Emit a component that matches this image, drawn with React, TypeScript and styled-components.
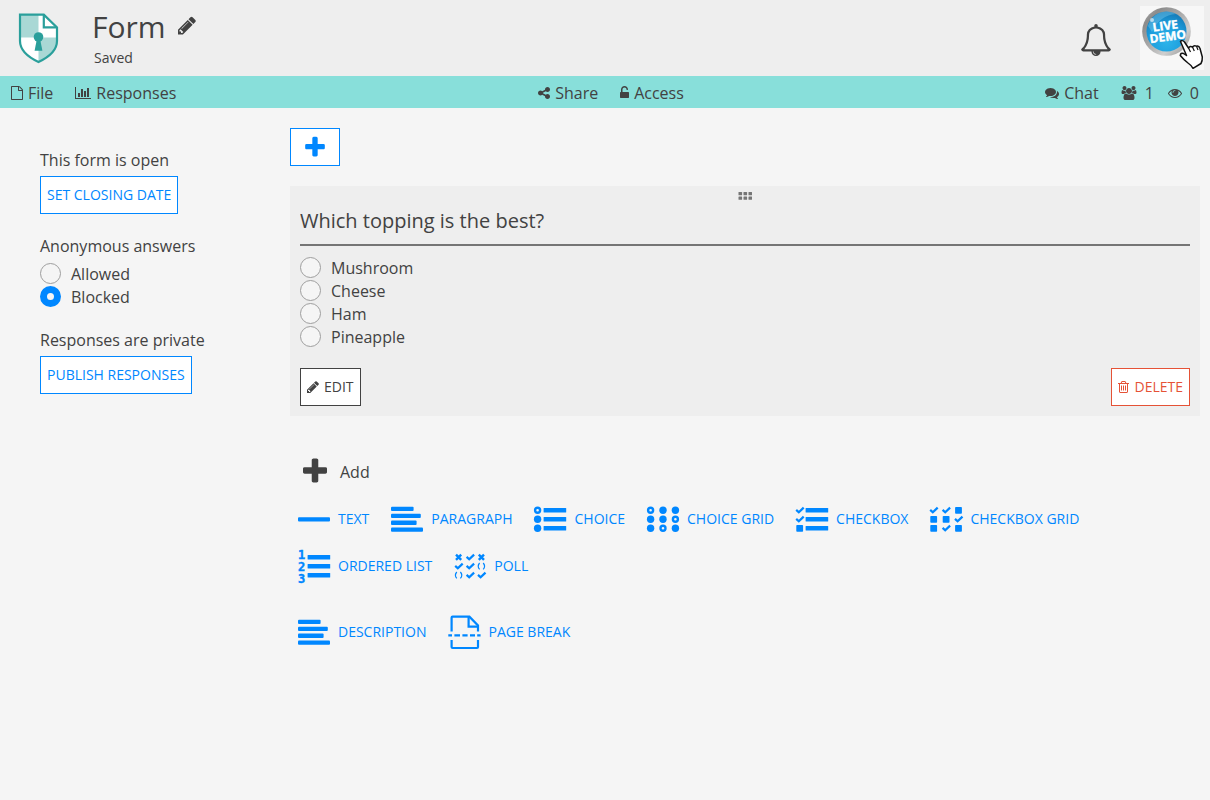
import React, { ReactNode, useState } from "react";
import styled, { createGlobalStyle, css } from "styled-components";

const colors = {
  page: "#f5f5f5",
  panel: "#eeeeee",
  bar: "#88dfda",
  text: "#424242",
  primary: "#0087ff",
  danger: "#e55236",
  line: "#757575",
  logo: "#2a9f9b",
  logoTint: "#a9d8d5",
};

const GlobalStyle = createGlobalStyle`
  *, *::before, *::after { box-sizing: border-box; }
  body {
    margin: 0;
    background: ${colors.page};
    color: ${colors.text};
    font: 16px/24px "Open Sans", sans-serif;
  }
  button, input { font: inherit; color: inherit; margin: 0; }
  button { cursor: pointer; }
  svg { display: block; flex: none; }
`;

/* ---------- glyphs on a 1792-unit em ---------- */

const glyphs = {
  pencil: {
    x: 128, w: 1536,
    d: "M491 1536l91-91-235-235-91 91v107h128v128h107zm523-928q0-22-22-22-10 0-17 7l-542 542q-7 7-7 17 0 22 22 22 10 0 17-7l542-542q7-7 7-17zm-54-192l416 416-832 832h-416v-416zm683 96q0 53-37 90l-166 166-416-416 166-165q36-38 90-38 53 0 91 38l235 234q37 39 37 91z",
  },
  file: {
    x: 128, w: 1536,
    d: "M1596 380q28 28 48 76t20 88v1152q0 40-28 68t-68 28h-1344q-40 0-68-28t-28-68v-1600q0-40 28-68t68-28h896q40 0 88 20t76 48zm-444-244v376h376q-10-29-22-41l-313-313q-12-12-41-22zm384 1528v-1024h-416q-40 0-68-28t-28-68v-416h-768v1536h1280z",
  },
  chart: {
    x: 0, w: 2048,
    d: "M640 896v512h-256v-512h256zm384-512v1024h-256v-1024h256zm1024 1152v128h-2048v-1536h128v1408h1920zm-640-896v768h-256v-768h256zm384-384v1152h-256v-1152h256z",
  },
  share: {
    x: 128, w: 1536,
    d: "M1344 1024q133 0 226.5 93.5t93.5 226.5-93.5 226.5-226.5 93.5-226.5-93.5-93.5-226.5q0-12 2-34l-360-180q-92 86-218 86-133 0-226.5-93.5t-93.5-226.5 93.5-226.5 226.5-93.5q126 0 218 86l360-180q-2-22-2-34 0-133 93.5-226.5t226.5-93.5 226.5 93.5 93.5 226.5-93.5 226.5-226.5 93.5q-126 0-218-86l-360 180q2 22 2 34t-2 34l360 180q92-86 218-86z",
  },
  unlock: {
    x: 320, w: 1152,
    d: "M1376 768q40 0 68 28t28 68v576q0 40-28 68t-68 28h-960q-40 0-68-28t-28-68v-576q0-40 28-68t68-28h32v-320q0-185 131.5-316.5t316.5-131.5 316.5 131.5 131.5 316.5q0 26-19 45t-45 19h-64q-26 0-45-19t-19-45q0-106-75-181t-181-75-181 75-75 181v320h736z",
  },
  comments: {
    x: 0, w: 1792,
    d: "M1408 768q0 139-94 257t-256.5 186.5-353.5 68.5q-86 0-176-16-124 88-278 128-36 9-86 16h-3q-11 0-20.5-8t-11.5-21q-1-3-1-6.5t.5-6.5 2-6l2.5-5 3.5-5.5 4-5 4.5-5 4-4.5q5-6 23-25t26-29.5 22.5-29 25-38.5 20.5-44q-124-72-195-177t-71-224q0-139 94-257t256.5-186.5 353.5-68.5 353.5 68.5 256.5 186.5 94 257zm384 256q0 120-71 224.5t-195 176.5q10 24 20.5 44t25 38.5 22.5 29 26 29.5 23 25q1 1 4 4.5t4.5 5 4 5 3.5 5.5l2.5 5 2 6 .5 6.5-1 6.5q-3 14-13 22t-22 7q-50-7-86-16-154-40-278-128-90 16-176 16-271 0-472-132 58 4 88 4 161 0 309-45t264-129q125-92 192-212t67-254q0-77-23-152 129 71 204 178t75 230z",
  },
  users: {
    x: 0, w: 2048,
    d: "M657 896q-162 5-265 128h-134q-82 0-138-40.5t-56-118.5q0-353 124-353 6 0 43.5 21t97.5 42.5 119 21.5q67 0 133-23-5 37-5 66 0 139 81 256zm1071 637q0 120-73 189.5t-194 69.5h-874q-121 0-194-69.5t-73-189.5q0-53 3.5-103.5t14-109 26.5-108.5 43-97.5 62-81 85.5-53.5 111.5-20q10 0 43 21.5t73 48 107 48 135 21.5 135-21.5 107-48 73-48 43-21.5q61 0 111.5 20t85.5 53.5 62 81 43 97.5 26.5 108.5 14 109 3.5 103.5zm-1024-1277q0 106-75 181t-181 75-181-75-75-181 75-181 181-75 181 75 75 181zm704 384q0 159-112.5 271.5t-271.5 112.5-271.5-112.5-112.5-271.5 112.5-271.5 271.5-112.5 271.5 112.5 112.5 271.5zm576 225q0 78-56 118.5t-138 40.5h-134q-103-123-265-128 81-117 81-256 0-29-5-66 66 23 133 23 59 0 119-21.5t97.5-42.5 43.5-21q124 0 124 353zm-128-609q0 106-75 181t-181 75-181-75-75-181 75-181 181-75 181 75 75 181z",
  },
  eye: {
    x: 0, w: 1792,
    d: "M1664 960q-152-236-381-353 61 104 61 225 0 185-131.5 316.5t-316.5 131.5-316.5-131.5-131.5-316.5q0-121 61-225-229 117-381 353 133 205 333.5 326.5t434.5 121.5 434.5-121.5 333.5-326.5zm-720-384q0-20-14-34t-34-14q-125 0-214.5 89.5t-89.5 214.5q0 20 14 34t34 14 34-14 14-34q0-86 61-147t147-61q20 0 34-14t14-34zm848 384q0 34-20 69-140 230-376.5 368.5t-499.5 138.5-499.5-139-376.5-368q-20-35-20-69t20-69q140-229 376.5-368t499.5-139 499.5 139 376.5 368q20 35 20 69z",
  },
  plus: {
    x: 192, w: 1408,
    d: "M1600 736v192q0 40-28 68t-68 28h-416v416q0 40-28 68t-68 28h-192q-40 0-68-28t-28-68v-416h-416q-40 0-68-28t-28-68v-192q0-40 28-68t68-28h416v-416q0-40 28-68t68-28h192q40 0 68 28t28 68v416h416q40 0 68 28t28 68z",
  },
  trash: {
    x: 192, w: 1408,
    d: "M704 736v576q0 14-9 23t-23 9h-64q-14 0-23-9t-9-23v-576q0-14 9-23t23-9h64q14 0 23 9t9 23zm256 0v576q0 14-9 23t-23 9h-64q-14 0-23-9t-9-23v-576q0-14 9-23t23-9h64q14 0 23 9t9 23zm256 0v576q0 14-9 23t-23 9h-64q-14 0-23-9t-9-23v-576q0-14 9-23t23-9h64q14 0 23 9t9 23zm128 724v-948h-896v948q0 22 7 40.5t14.5 27 10.5 8.5h832q3 0 10.5-8.5t14.5-27 7-40.5zm-672-1076h448l-48-117q-7-9-17-11h-317q-10 2-17 11zm928 32v64q0 14-9 23t-23 9h-96v948q0 83-47 143.5t-113 60.5h-832q-66 0-113-58.5t-47-141.5v-952h-96q-14 0-23-9t-9-23v-64q0-14 9-23t23-9h309l70-167q15-37 54-63t79-26h320q40 0 79 26t54 63l70 167h309q14 0 23 9t9 23z",
  },
  bell: {
    x: 0, w: 1792,
    d: "M912 1696q0-16-16-16-59 0-101.5-42.5t-42.5-101.5q0-16-16-16t-16 16q0 73 51.5 124.5t124.5 51.5q16 0 16-16zm-666-288h1300q-266-300-266-832 0-51-24-105t-69-103-121.5-80.5-169.5-31.5-169.5 31.5-121.5 80.5-69 103-24 105q0 532-266 832zm1482 0q0 52-38 90t-90 38h-448q0 106-75 181t-181 75-181-75-75-181h-448q-52 0-90-38t-38-90q50-42 91-88t85-119.5 74.5-158.5 50-206 19.5-260q0-152 117-282.5t307-158.5q-8-19-8-39 0-40 28-68t68-28 68 28 28 68q0 20-8 39 190 28 307 158.5t117 282.5q0 139 19.5 260t50 206 74.5 158.5 85 119.5 91 88z",
  },
};

function Glyph({ name, size = 14 }: { name: keyof typeof glyphs; size?: number }) {
  const g = glyphs[name];
  return (
    <svg
      width={Math.round((size * g.w) / 1792)}
      height={size}
      viewBox={`${g.x} 0 ${g.w} 1792`}
      fill="currentColor"
      aria-hidden="true"
    >
      <path d={g.d} />
    </svg>
  );
}

/* ---------- question type icons, 32 x 32 ---------- */

const cols = [3.6, 16, 28.4];
const rows = [7.2, 16.2, 25.2];

type MarkKind = "dot" | "ring" | "square" | "check" | "cross" | "parens";

function Mark({ kind, x, y }: { kind: MarkKind; x: number; y: number }) {
  switch (kind) {
    case "dot":
      return <circle cx={x} cy={y} r={3.7} fill="currentColor" />;
    case "ring":
      return <circle cx={x} cy={y} r={2.5} fill="none" stroke="currentColor" strokeWidth={2.4} />;
    case "square":
      return <rect x={x - 3.3} y={y - 3.3} width={6.8} height={6.8} rx={0.8} fill="currentColor" />;
    case "check":
      return (
        <path
          d={`M${x - 3.4} ${y - 0.3}l2.6 2.4 4.9-4.7`}
          fill="none" stroke="currentColor" strokeWidth={2.2}
        />
      );
    case "cross":
      return (
        <path
          d={`M${x - 2.6} ${y - 2.6}l5.200 5.200m0-5.200l-5.200 5.200`}
          fill="none" stroke="currentColor" strokeWidth={2.4}
        />
      );
    case "parens":
      return (
        <path
          d={`M${x - 1.8} ${y - 3.2}q-2.8 3.2 0 6.4M${x + 1.8} ${y - 3.2}q2.8 3.2 0 6.4`}
          fill="none" stroke="currentColor" strokeWidth={1.2}
        />
      );
  }
}

const TypeSvg = ({ children }: { children: ReactNode }) => (
  <svg width="32" height="32" viewBox="0 0 32 32" overflow="visible" aria-hidden="true">
    {children}
  </svg>
);

const ListBars = () => (
  <g fill="currentColor">
    {rows.map((y) => (
      <rect key={y} x={9.6} y={y - 2.3} width={22.6} height={4.6} rx={0.5} />
    ))}
  </g>
);

const ListIcon = ({ marks }: { marks: MarkKind[] }) => (
  <TypeSvg>
    {marks.map((kind, i) => <Mark key={i} kind={kind} x={3.6} y={rows[i]} />)}
    <ListBars />
  </TypeSvg>
);

const GridIcon = ({ marks, inset = 0 }: { marks: MarkKind[]; inset?: number }) => (
  <TypeSvg>
    {marks.map((kind, i) => (
      <Mark key={i} kind={kind} x={cols[i % 3] + inset * (1 - (i % 3))} y={rows[Math.floor(i / 3)]} />
    ))}
  </TypeSvg>
);

const TextIcon = () => (
  <TypeSvg>
    <rect x={0} y={14.2} width={32} height={4.3} rx={1} fill="currentColor" />
  </TypeSvg>
);

const ParagraphIcon = () => (
  <TypeSvg>
    <g fill="currentColor">
      <rect x={0} y={3.7} width={22.6} height={4.3} rx={1} />
      <rect x={0} y={10.8} width={29.8} height={4.3} rx={1} />
      <rect x={0} y={17.6} width={25.6} height={4.3} rx={1} />
      <rect x={0} y={24.5} width={32} height={4.3} rx={1} />
    </g>
  </TypeSvg>
);

const Numeral = styled.text`
  font: bold 12px "DejaVu Sans Mono", monospace;
  fill: currentColor;
  stroke: currentColor;
  stroke-width: 0.4px;
`;

const OrderedIcon = () => (
  <TypeSvg>
    <Numeral x={0} y={9}>1</Numeral>
    <Numeral x={0} y={21}>2</Numeral>
    <Numeral x={0} y={33}>3</Numeral>
    <ListBars />
  </TypeSvg>
);

const PageBreakIcon = () => (
  <TypeSvg>
    <g fill="none" stroke="currentColor" strokeWidth={2.2}>
      <path d="M3.6 15.5V1.7q0-1 1-1H21.4L30 9.5v6" />
      <path d="M20.6 .7V10.6H30" />
      <path d="M3.6 24V31q0 1 1 1H29q1 0 1-1V24" />
      <path d="M.3 19.4H4M6.4 19.4H12M14.4 19.4H19.6M22 19.4H27M29.2 19.4H32.6" />
    </g>
  </TypeSvg>
);

/* ---------- brand drawings ---------- */

const Logo = () => (
  <svg width="50" height="58" viewBox="0 0 50 58" role="img" aria-label="Form application">
    <path d="M6 5.7H30L43 18.5V32C43 42 34 48.5 24.5 53C15 48.5 6 42 6 32Z" fill="#fff" />
    <path d="M6 5.7H24.5V28.5H6Z" fill={colors.logoTint} />
    <path d="M24.5 28.5H43V32C43 42 34 48.5 24.5 53Z" fill={colors.logoTint} />
    <path
      d="M6 5.7H29.8L43 18.5V32C43 42 34 48.5 24.5 53C15 48.5 6 42 6 32Z"
      fill="none" stroke={colors.logo} strokeWidth="2.2"
    />
    <path d="M29.8 5.7V18.3H43" fill="none" stroke={colors.logo} strokeWidth="2.2" />
    <circle cx="24.5" cy="28" r="4.8" fill={colors.logo} />
    <path d="M22.9 30H26.1L28.4 41.700H20.6Z" fill={colors.logo} />
  </svg>
);

const DemoWord = styled.text`
  font: bold 12px "Open Sans", sans-serif;
  fill: #fff;
  stroke: #fff;
  stroke-width: 0.4px;
  text-anchor: middle;
`;

const DemoBadge = () => (
  <svg width="64" height="64" viewBox="0 0 64 64" role="img" aria-label="Live demo">
    <defs>
      <linearGradient id="rim" x1="0" y1="0" x2="1" y2="1">
        <stop offset="0" stopColor="#b9b9b9" />
        <stop offset="0.2" stopColor="#8c8c8c" />
        <stop offset="0.45" stopColor="#a8a8a8" />
        <stop offset="0.7" stopColor="#cfcfcf" />
        <stop offset="1" stopColor="#8a8a8a" />
      </linearGradient>
      <radialGradient id="face" cx="0.5" cy="0.75" r="0.75">
        <stop offset="0" stopColor="#2cb4ea" />
        <stop offset="0.6" stopColor="#1c9cdc" />
        <stop offset="1" stopColor="#1579b5" />
      </radialGradient>
    </defs>
    <rect width="64" height="64" fill="#f7f7f7" />
    <circle cx="26.5" cy="25.5" r="24.3" fill="url(#rim)" />
    <circle cx="26.5" cy="25.5" r="20" fill="url(#face)" />
    <path d="M8 20A19 19 0 0 1 36 8Q20 9 12 26Z" fill="#7fd0f2" opacity="0.4" />
    <circle cx="12" cy="14" r="2" fill="#fff" opacity="0.6" />
    <g transform="rotate(-8 26 25)">
      <DemoWord x="26" y="24">LIVE</DemoWord>
      <DemoWord x="27" y="35">DEMO</DemoWord>
    </g>
    <path
      d="M40.5 35.5Q42 33.5 44.5 36L48.5 42Q50 39.5 52.5 41Q54 38.8 56.5 40.2Q59 39.5 60 42.5L62.3 51Q62.5 55 61 57.5L53 62.3Q51 59 48 57Q43 53 40.3 49.5Q40.5 46.5 43.5 47.5L46.5 49.5Z"
      fill="#fff" stroke="#111" strokeWidth="1.5" strokeLinejoin="round"
    />
    <path d="M48.5 42L50.5 46M52.5 41L54.3 45M56.5 40.2L58 44" stroke="#111" strokeWidth="1.2" />
  </svg>
);

const GripIcon = () => (
  <svg width="14" height="8" viewBox="0 0 14 8" fill={colors.line} aria-hidden="true">
    {[0, 5, 10].map((x) =>
      [0, 4.5].map((y) => <rect key={`${x}-${y}`} x={x + 0.5} y={y} width={3.6} height={3.3} rx={0.6} />)
    )}
  </svg>
);

/* ---------- page parts ---------- */

const Header = styled.header`
  display: flex;
  align-items: center;
  height: 76px;
  padding: 0 6px 0 14px;
  background: ${colors.panel};
`;

const TitleBlock = styled.div`
  flex: 1;
  padding-left: 28px;
`;

const TitleRow = styled.div`
  display: flex;
  align-items: center;
  gap: 12px;
`;

const Title = styled.h1`
  margin: 0;
  font-size: 30px;
  line-height: 40px;
  font-weight: 400;
`;

const SaveState = styled.div`
  padding-left: 2px;
  font-size: 14px;
  line-height: 22px;
`;

const PlainButton = styled.button`
  display: flex;
  align-items: center;
  padding: 0;
  border: 0;
  background: none;
`;

const RenameButton = styled(PlainButton)`
  padding-bottom: 4px;
`;

const BellButton = styled(PlainButton)`
  padding-top: 4px;
`;

const UserArea = styled.div`
  display: flex;
  align-items: center;
  gap: 28px;
`;

const Toolbar = styled.nav`
  display: grid;
  grid-template-columns: 1fr auto 1fr;
  align-items: center;
  min-height: 32px;
  padding: 2px 11px 0;
  background: ${colors.bar};
`;

const ToolGroup = styled.div<{ $align?: "center" | "end" }>`
  display: flex;
  gap: 22px;
  ${(p) => p.$align === "center" && css`padding-left: 12px;`}
  ${(p) => p.$align === "end" && css`justify-content: flex-end;`}
`;

const ToolButton = styled(PlainButton)`
  gap: 5px;
  line-height: 24px;
`;

const Presence = styled.div`
  display: flex;
  align-items: center;
  gap: 8px;
`;

const PresenceGroup = styled.div`
  display: flex;
  gap: 14px;
`;

const Layout = styled.div`
  display: flex;
  align-items: flex-start;
`;

const Sidebar = styled.aside`
  display: flex;
  flex: none;
  flex-direction: column;
  gap: 20px;
  width: 290px;
  padding: 40px 20px 20px 40px;
`;

const SideSection = styled.section`
  display: flex;
  flex-direction: column;
  align-items: flex-start;
  gap: 4px;
`;

const Fieldset = styled.fieldset`
  min-width: 0;
  margin: 0;
  padding: 0;
  border: 0;
`;

const Legend = styled.legend`
  padding: 0 0 4px;
`;

const OutlineButton = styled.button<{ $tone?: "primary" | "neutral" | "danger" }>`
  display: flex;
  align-items: center;
  justify-content: center;
  gap: 5px;
  height: 38px;
  padding: 0 6px;
  border: 1px solid;
  background: #fff;
  font-size: 14px;
  line-height: 20px;
  text-transform: uppercase;
  color: ${(p) =>
    p.$tone === "danger" ? colors.danger : p.$tone === "neutral" ? colors.text : colors.primary};
`;

const InsertButton = styled(OutlineButton)`
  width: 50px;
`;

const RadioLabel = styled.label`
  display: flex;
  align-items: center;
  gap: 10px;
  height: 23px;
`;

const RadioInput = styled.input`
  appearance: none;
  width: 21px;
  height: 21px;
  border: 1px solid #9e9e9e;
  border-radius: 50%;
  background: ${colors.page};
  &:checked {
    border: 7px solid ${colors.primary};
  }
`;

const Main = styled.main`
  display: flex;
  flex: 1;
  flex-direction: column;
  align-items: flex-start;
  gap: 20px;
  min-width: 0;
  padding: 20px 10px 20px 0;
`;

const Card = styled.section`
  width: 100%;
  padding: 0 10px 10px;
  background: ${colors.panel};
`;

const Grip = styled.div`
  display: flex;
  align-items: center;
  justify-content: center;
  height: 20px;
`;

const QuestionInput = styled.input`
  display: block;
  width: 100%;
  height: 40px;
  margin-bottom: 10px;
  padding: 0 0 10px;
  border: 0;
  border-bottom: 2px solid ${colors.line};
  border-radius: 0;
  background: none;
  font-size: 20px;
  line-height: 28px;
`;

const CardActions = styled.div`
  display: flex;
  justify-content: space-between;
  padding-top: 20px;
`;

const AddPanel = styled.section`
  padding-top: 20px;
`;

const AddHeading = styled.h2`
  display: flex;
  align-items: center;
  gap: 13px;
  margin: 0 0 11px;
  padding-left: 13px;
  font-size: 16px;
  line-height: 30px;
  font-weight: 400;
`;

const TypeRow = styled.div`
  display: flex;
  flex-wrap: wrap;
  gap: 5px 6px;
  & + & {
    margin-top: 24px;
  }
`;

const TypeButton = styled(PlainButton)`
  gap: 8px;
  height: 42px;
  padding: 0 8px;
  font-size: 14px;
  line-height: 20px;
  text-transform: uppercase;
  color: ${colors.primary};
`;

const fieldTypes: [string, ReactNode][] = [
  ["Text", <TextIcon />],
  ["Paragraph", <ParagraphIcon />],
  ["Choice", <ListIcon marks={["ring", "dot", "dot"]} />],
  ["Choice grid", <GridIcon marks={["ring", "dot", "dot", "dot", "dot", "ring", "dot", "ring", "dot"]} />],
  ["Checkbox", <ListIcon marks={["check", "check", "square"]} />],
  ["Checkbox grid", <GridIcon marks={["check", "check", "square", "square", "square", "check", "square", "check", "square"]} />],
  ["Ordered list", <OrderedIcon />],
  ["Poll", <GridIcon inset={1} marks={["cross", "check", "cross", "check", "check", "parens", "parens", "check", "check"]} />],
];

const staticTypes: [string, ReactNode][] = [
  ["Description", <ParagraphIcon />],
  ["Page break", <PageBreakIcon />],
];

const TypeButtons = ({ items }: { items: [string, ReactNode][] }) => (
  <TypeRow>
    {items.map(([label, icon]) => (
      <TypeButton key={label} type="button">
        {icon}
        <span>{label}</span>
      </TypeButton>
    ))}
  </TypeRow>
);

function RadioList({ name, options, initial = "" }: { name: string; options: string[]; initial?: string }) {
  const [value, setValue] = useState(initial);
  return (
    <>
      {options.map((option) => (
        <RadioLabel key={option}>
          <RadioInput
            type="radio"
            name={name}
            value={option}
            checked={value === option}
            onChange={() => setValue(option)}
          />
          <span>{option}</span>
        </RadioLabel>
      ))}
    </>
  );
}

export default function App() {
  const [question, setQuestion] = useState("Which topping is the best?");
  return (
    <>
      <GlobalStyle />
      <Header>
        <Logo />
        <TitleBlock>
          <TitleRow>
            <Title>Form</Title>
            <RenameButton type="button" aria-label="Rename">
              <Glyph name="pencil" size={21} />
            </RenameButton>
          </TitleRow>
          <SaveState>Saved</SaveState>
        </TitleBlock>
        <UserArea>
          <BellButton type="button" aria-label="Notifications">
            <Glyph name="bell" size={32} />
          </BellButton>
          <PlainButton type="button" aria-label="Account">
            <DemoBadge />
          </PlainButton>
        </UserArea>
      </Header>

      <Toolbar>
        <ToolGroup>
          <ToolButton type="button"><Glyph name="file" /><span>File</span></ToolButton>
          <ToolButton type="button"><Glyph name="chart" /><span>Responses</span></ToolButton>
        </ToolGroup>
        <ToolGroup $align="center">
          <ToolButton type="button"><Glyph name="share" /><span>Share</span></ToolButton>
          <ToolButton type="button"><Glyph name="unlock" /><span>Access</span></ToolButton>
        </ToolGroup>
        <ToolGroup $align="end">
          <ToolButton type="button"><Glyph name="comments" /><span>Chat</span></ToolButton>
          <PresenceGroup>
            <Presence><Glyph name="users" /><span>1</span></Presence>
            <Presence><Glyph name="eye" /><span>0</span></Presence>
          </PresenceGroup>
        </ToolGroup>
      </Toolbar>

      <Layout>
        <Sidebar>
          <SideSection>
            <span>This form is open</span>
            <OutlineButton type="button">Set closing date</OutlineButton>
          </SideSection>
          <Fieldset>
            <Legend>Anonymous answers</Legend>
            <RadioList name="anonymous" options={["Allowed", "Blocked"]} initial="Blocked" />
          </Fieldset>
          <SideSection>
            <span>Responses are private</span>
            <OutlineButton type="button">Publish responses</OutlineButton>
          </SideSection>
        </Sidebar>

        <Main>
          <InsertButton type="button" aria-label="Insert question">
            <Glyph name="plus" size={25} />
          </InsertButton>

          <Card>
            <Grip><GripIcon /></Grip>
            <QuestionInput
              type="text"
              aria-label="Question"
              value={question}
              onChange={(e) => setQuestion(e.target.value)}
            />
            <Fieldset aria-label={question}>
              <RadioList name="topping" options={["Mushroom", "Cheese", "Ham", "Pineapple"]} />
            </Fieldset>
            <CardActions>
              <OutlineButton type="button" $tone="neutral"><Glyph name="pencil" /><span>Edit</span></OutlineButton>
              <OutlineButton type="button" $tone="danger"><Glyph name="trash" /><span>Delete</span></OutlineButton>
            </CardActions>
          </Card>

          <AddPanel>
            <AddHeading><Glyph name="plus" size={31} />Add</AddHeading>
            <TypeButtons items={fieldTypes} />
            <TypeButtons items={staticTypes} />
          </AddPanel>
        </Main>
      </Layout>
    </>
  );
}
